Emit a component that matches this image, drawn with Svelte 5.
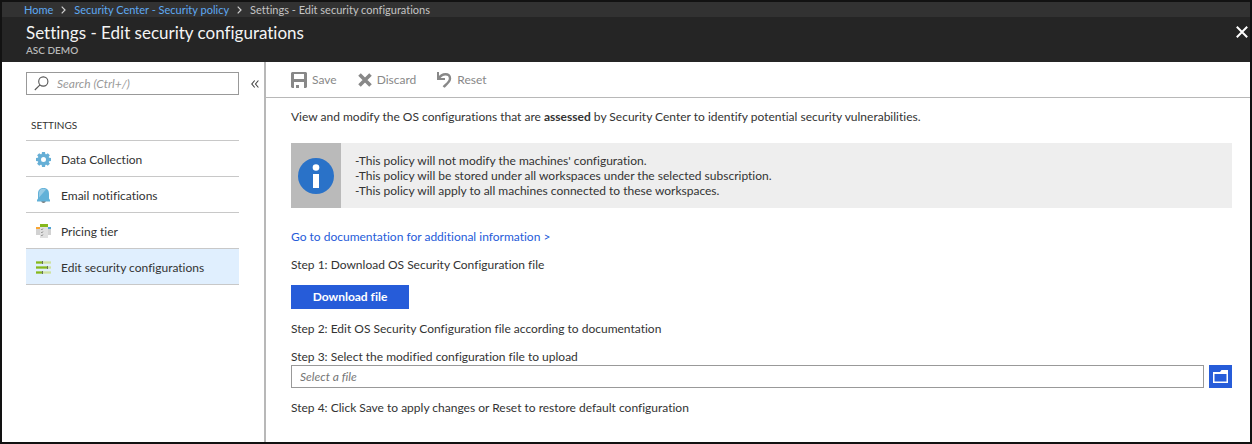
<script>
  const items = [
    { label: 'Data Collection', icon: 'gear' },
    { label: 'Email notifications', icon: 'bell' },
    { label: 'Pricing tier', icon: 'tier' },
    { label: 'Edit security configurations', icon: 'sliders' }
  ];
  const teeth = [0, 45, 90, 135, 180, 225, 270, 315];
  let selected = $state('sliders');
  let query = $state('');
  let file = $state('');
</script>

<div class="frame">
  <nav class="crumbs" aria-label="Breadcrumb">
    <a href="#home">Home</a>
    <svg width="5" height="8" viewBox="0 0 5 8" aria-hidden="true"><path d="M.7.7 4 4 .7 7.3" /></svg>
    <a href="#policy">Security Center - Security policy</a>
    <svg width="5" height="8" viewBox="0 0 5 8" aria-hidden="true"><path d="M.7.7 4 4 .7 7.3" /></svg>
    <span>Settings - Edit security configurations</span>
  </nav>

  <header>
    <div>
      <h1>Settings - Edit security configurations</h1>
      <p>ASC DEMO</p>
    </div>
    <button class="close" aria-label="Close">
      <svg width="12" height="12" viewBox="0 0 12 12"><path d="M.8.8 11.2 11.2M11.2.8.8 11.2" /></svg>
    </button>
  </header>

  <div class="body">
    <aside>
      <div class="searchrow">
        <label class="search">
          <svg width="15" height="15" viewBox="0 0 15 15" aria-hidden="true">
            <circle cx="9.3" cy="5.5" r="4.6" /><path d="M6 8.8.8 14" />
          </svg>
          <input type="text" aria-label="Search" placeholder="Search (Ctrl+/)" bind:value={query} />
        </label>
        <button class="collapse" aria-label="Collapse menu">
          <svg width="8" height="8" viewBox="0 0 8 8"><path d="M3.7.5.8 4l2.9 3.5M7.4.5 4.5 4l2.9 3.5" /></svg>
        </button>
      </div>
      <h2>SETTINGS</h2>
      <ul>
        {#each items as item}
          <li>
            <button class:selected={selected === item.icon} onclick={() => (selected = item.icon)}>
              <svg width="15" height="15" viewBox="0 0 15 15" aria-hidden="true">
                {#if item.icon === 'gear'}
                  {#each teeth as a}
                    <path d="M6 0h3l.5 3h-4z" fill="#66afd6" transform="rotate({a} 7.5 7.5)" />
                  {/each}
                  <circle cx="7.5" cy="7.5" r="4.1" fill="none" stroke="#66afd6" stroke-width="3.2" />
                {:else if item.icon === 'bell'}
                  <path d="M5.2 13h4.6c-.3 2.6-4.3 2.6-4.6 0z" fill="#7a7a7a" />
                  <path d="M7.5 0C3.500 0 2 2.500 2 6v4.500L1 12v1.500h13V12l-1-1.500V6C13 2.500 11.500 0 7.500 0z" fill="#62b1d8" />
                  <path d="M7 .8C3.800 1 2.900 3.500 3 6.500v3L10 1.500C9 .9 8 .7 7 .8z" fill="#97cbe5" />
                {:else if item.icon === 'tier'}
                  <path d="M0 3h4v8H0zM11 3h4v8h-4z" fill="#d2d2d2" />
                  <path d="M0 3h4v2H0z" fill="#f9a533" />
                  <path d="M12 3h3v2h-3z" fill="#4fa3d4" />
                  <path d="M4 2h8v12H4z" fill="#e0e0e0" />
                  <path d="M4 0h8v3H4z" fill="#86b81c" />
                  <path d="m5.200 5.200.7.700 1-1.400M5.200 8.200l.7.700 1-1.400M5.200 11.200l.7.700 1-1.400" fill="none" stroke="#777" stroke-width=".8" />
                {:else}
                  <path d="M0 1h15v3H0zM0 6h15v3H0zM0 11h15v3H0z" fill="#cfe2a0" />
                  <path d="M0 1h6v3H0zM0 6h11v3H0zM0 11h6v3H0z" fill="#86b81c" />
                  <path d="M0 1h15M0 4h15M0 6h15M0 9h15M0 11h15M0 14h15" stroke="#e0effe" stroke-width=".7" />
                  <path d="M6 1h1v3H6zM11 6h1v3h-1zM6 11h1v3H6z" fill="#66735c" />
                {/if}
              </svg>
              <span>{item.label}</span>
            </button>
          </li>
        {/each}
      </ul>
    </aside>

    <main>
      <div class="toolbar">
        <button>
          <svg width="16" height="16" viewBox="0 0 16 16" aria-hidden="true">
            <path fill-rule="evenodd" d="M1 0h14l1 1v14l-1 1h-2v-6H3v6H1l-1-1V1zM3 2v5h10V2zM5 13h3v3H5z" fill="#888" />
          </svg>
          <span>Save</span>
        </button>
        <button>
          <svg width="14" height="14" viewBox="0 0 14 14" aria-hidden="true">
            <path d="M1.5 1.5 12.5 12.5M12.5 1.5 1.5 12.5" stroke="#888" stroke-width="3.6" />
          </svg>
          <span>Discard</span>
        </button>
        <button>
          <svg width="15" height="16" viewBox="0 0 15 16" aria-hidden="true">
            <path d="M1.500 6.500C5 1 13 .5 13 6.500c0 3.500-3.500 5.500-6.500 8.500" fill="none" stroke="#888" stroke-width="2.4" />
            <path d="M1 0v7h7" fill="none" stroke="#888" stroke-width="2" />
          </svg>
          <span>Reset</span>
        </button>
      </div>

      <div class="content">
        <p>View and modify the OS configurations that are <strong>assessed</strong> by Security Center to identify potential security vulnerabilities.</p>

        <section class="notice">
          <div class="badge">
            <svg width="36" height="36" viewBox="0 0 36 36" aria-hidden="true">
              <circle cx="18" cy="18" r="18" fill="#2a72c8" />
              <circle cx="18" cy="9.5" r="3.3" fill="#fff" /><path d="M15 16h6v14h-6z" fill="#fff" />
            </svg>
          </div>
          <div class="lines">
            <p>-This policy will not modify the machines' configuration.</p>
            <p>-This policy will be stored under all workspaces under the selected subscription.</p>
            <p>-This policy will apply to all machines connected to these workspaces.</p>
          </div>
        </section>

        <a class="doc" href="#documentation">Go to documentation for additional information &gt;</a>
        <p>Step 1: Download OS Security Configuration file</p>
        <button class="download">Download file</button>
        <p>Step 2: Edit OS Security Configuration file according to documentation</p>
        <div class="upload">
          <label for="file">Step 3: Select the modified configuration file to upload</label>
          <div class="picker">
            <input id="file" type="text" placeholder="Select a file" bind:value={file} />
            <button aria-label="Browse">
              <svg width="15" height="13" viewBox="0 0 15 13">
                <path fill-rule="evenodd" d="M0 2h7l1.500-2H15v13H0zM1.500 4v7.500h12V4z" fill="#fff" />
              </svg>
            </button>
          </div>
        </div>
        <p>Step 4: Click Save to apply changes or Reset to restore default configuration</p>
      </div>
    </main>
  </div>
</div>

<style>
  :global(body) { margin: 0; }
  * { box-sizing: border-box; }
  .frame {
    display: flex;
    flex-direction: column;
    min-height: 100vh;
    border: 2px solid #121212;
    background: #fff;
    color: #333;
    font: 12px/16px 'Segoe UI', Lato, sans-serif;
    font-variant-ligatures: none;
  }
  h1, h2, p, ul { margin: 0; padding: 0; font-weight: 400; }
  ul { list-style: none; }
  button { padding: 0; border: 0; background: none; color: inherit; font: inherit; cursor: pointer; }
  button:focus-visible { outline: 1px solid #59b4d9; }
  a { text-decoration: none; }
  svg { display: block; flex: none; }
  input { font: inherit; color: #333; outline: none; }
  input::placeholder { font-style: italic; color: #767676; opacity: 1; }

  .crumbs {
    display: flex;
    align-items: center;
    gap: 8px;
    height: 15px;
    padding-left: 22px;
    background: #323232;
    color: #c4c4c4;
    font-size: 11px;
    line-height: 15px;
  }
  .crumbs a { color: #5ea9f2; }
  .crumbs svg { fill: none; stroke: #d0d0d0; stroke-width: 1.2; }

  header {
    display: flex;
    justify-content: space-between;
    align-items: flex-start;
    height: 45px;
    padding: 4px 2px 0 24px;
    background: #252525;
    color: #f4f4f4;
  }
  h1 { font-size: 17px; line-height: 24px; }
  header p { font-size: 10px; line-height: 10px; font-weight: 600; color: #b8b8b8; }
  .close { padding-top: 5px; }
  .close svg { fill: none; stroke: #fff; stroke-width: 2; }

  .body { display: flex; flex: 1; }
  aside { width: 264px; flex: none; padding: 10px 0 0 24px; border-right: 2px solid #b8b8b8; }
  .searchrow { display: flex; align-items: center; gap: 12px; }
  .search {
    display: flex;
    align-items: center;
    gap: 8px;
    width: 213px;
    height: 23px;
    padding-left: 7px;
    border: 1px solid #999;
  }
  .search svg { fill: none; stroke: #555; stroke-width: 1.1; }
  .search input { flex: 1; min-width: 0; border: 0; padding: 0; background: none; }
  .search input::placeholder { color: #999; }
  .collapse svg { fill: none; stroke: #444; stroke-width: 1.1; }
  h2 { margin-top: 22px; padding-left: 5px; font-size: 10px; line-height: 16px; }
  ul { width: 213px; margin-top: 7px; border-top: 1px solid #c8c8c8; }
  li { border-bottom: 1px solid #c8c8c8; }
  li button { display: flex; align-items: center; gap: 10px; width: 100%; height: 35px; padding: 2px 0 0 10px; text-align: left; }
  li .selected { background: #e0effe; }

  main { flex: 1; min-width: 0; }
  .toolbar {
    display: flex;
    gap: 21px;
    height: 36px;
    padding-left: 25px;
    border-bottom: 1px solid #b8b8b8;
    color: #888;
  }
  .toolbar button { display: flex; align-items: center; gap: 5px; }

  .content { display: flex; flex-direction: column; gap: 12px; padding: 11px 18px 12px 25px; }
  .notice { display: flex; margin: 6px 0 9px; background: #eee; }
  .badge { display: grid; place-items: center; width: 50px; background: #bababa; }
  .lines { padding: 10px 14px; line-height: 15px; }
  .doc { align-self: flex-start; color: #265cd9; }
  .download { align-self: flex-start; width: 118px; height: 24px; background: #265cd9; color: #fff; font-weight: 700; }
  .upload label { display: block; }
  .picker { display: flex; gap: 5px; }
  .picker input { flex: 1; min-width: 0; height: 23px; padding: 0 8px; border: 1px solid #999; background: #fff; }
  .picker button { display: grid; place-items: center; width: 23px; height: 23px; background: #265cd9; }
</style>
